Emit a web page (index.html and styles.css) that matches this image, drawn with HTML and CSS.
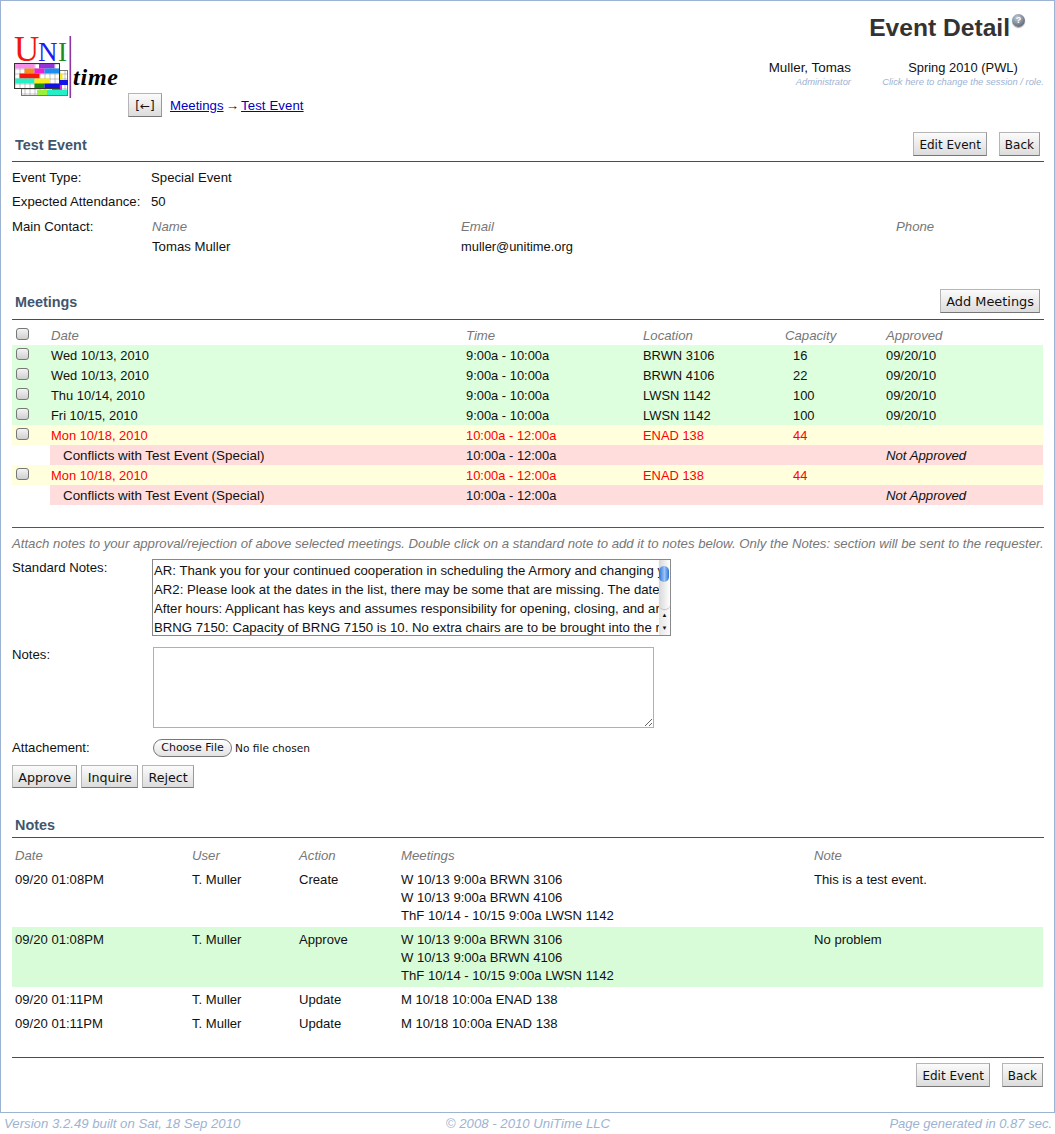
FILE: index.html
```html
<!DOCTYPE html>
<html lang="en">
<head>
<meta charset="utf-8">
<title>Event Detail</title>
<link rel="stylesheet" href="styles.css">
</head>
<body>
<div class="frame">
  <header class="top">
    <div class="top-left">
      <svg class="logo" width="106" height="64" viewBox="14 34 106 64">
        <defs>
          <pattern id="cells" x="14.5" y="62.5" width="5" height="5" patternUnits="userSpaceOnUse">
            <path d="M5 0H0V5" fill="none" stroke="#8a8a8a" stroke-width="1"/>
          </pattern>
        </defs>
        <text class="logo-uni" x="14" y="60" fill="#f0170c">U</text>
        <text class="logo-ni" x="38" y="60" fill="#1c1cf0">N</text>
        <text class="logo-ni" x="58" y="60" fill="#1f8a1f">I</text>
        <rect x="21.5" y="69.5" width="46" height="25" fill="#fff"/>
        <rect x="21.5" y="69.5" width="46" height="25" fill="url(#cells)" stroke="#777"/>
        <rect x="60" y="73" width="2.5" height="5" fill="#f2e81c"/>
        <rect x="60" y="79" width="8" height="5" fill="#1414e6"/>
        <rect x="52" y="84" width="10" height="5" fill="#e92ad8"/>
        <rect x="37" y="89" width="10" height="5" fill="#9bf03c"/>
        <rect x="47" y="89" width="20" height="5" fill="#25efc6"/>
        <rect x="14.5" y="62.5" width="45" height="25" fill="#fff"/>
        <rect x="14.5" y="62.5" width="45" height="25" fill="url(#cells)"/>
        <rect x="15" y="62.5" width="19.5" height="5" fill="#f58ee8"/>
        <rect x="39" y="62.5" width="15.5" height="5" fill="#9333d8"/>
        <rect x="24.5" y="67.5" width="10" height="5" fill="#f58e1e"/>
        <rect x="34.5" y="67.5" width="10" height="5" fill="#ee1fd6"/>
        <rect x="44.5" y="67.5" width="15" height="5" fill="#1a8ff0"/>
        <rect x="19.5" y="72.5" width="20" height="5" fill="#f5160c"/>
        <rect x="14.5" y="77.5" width="20" height="5" fill="#25efc6"/>
        <rect x="34.5" y="77.5" width="15" height="5" fill="#f6f01a"/>
        <rect x="34.5" y="82.5" width="10" height="5" fill="#168a16"/>
        <rect x="44.5" y="82.5" width="15" height="5" fill="#1212e0"/>
        <rect x="14.5" y="62.5" width="45" height="25" fill="none" stroke="#333"/>
        <rect x="69.5" y="35" width="1.6" height="62" fill="#8e35a8"/>
        <text class="logo-time" x="73" y="84" textLength="45">time</text>
      </svg>
      <nav class="crumbs">
        <button class="btn btn-back" type="button">[←]</button>
        <span class="crumb-path"><a href="#meetings">Meetings</a> <span class="sep">→</span> <a class="crumb-last" href="#event">Test Event</a></span>
      </nav>
    </div>
    <div class="top-right">
      <div class="page-title">
        <h1>Event Detail</h1>
        <span class="help">?</span>
      </div>
      <div class="session">
        <div class="session-user">Muller, Tomas<small>Administrator</small></div>
        <div class="session-term">Spring 2010 (PWL)<small>Click here to change the session / role.</small></div>
      </div>
    </div>
  </header>

  <section class="sec-head sec-first">
    <h2>Test Event</h2>
    <div class="actions"><button class="btn" type="button">Edit Event</button><button class="btn" type="button">Back</button></div>
  </section>

  <div class="field f-type"><span class="label">Event Type:</span><span>Special Event</span></div>
  <div class="field f-att"><span class="label">Expected Attendance:</span><span>50</span></div>
  <div class="contact">
    <span class="label">Main Contact:</span>
    <div class="contact-grid">
      <em>Name</em><em>Email</em><em>Phone</em>
      <span>Tomas Muller</span><span class="contact-mail">muller@unitime.org</span><span></span>
    </div>
  </div>

  <section class="sec-head sec-meet">
    <h2>Meetings</h2>
    <div class="actions"><button class="btn btn-wide" type="button">Add Meetings</button></div>
  </section>

  <table class="meet">
    <colgroup><col class="c1"><col class="c2"><col class="c3"><col class="c4"><col class="c5"><col class="c6"></colgroup>
    <thead>
      <tr><th><input type="checkbox" class="cb"></th><th>Date</th><th>Time</th><th>Location</th><th>Capacity</th><th>Approved</th></tr>
    </thead>
    <tbody>
      <tr class="ok"><td><input type="checkbox" class="cb"></td><td>Wed 10/13, 2010</td><td>9:00a - 10:00a</td><td>BRWN 3106</td><td class="cap">16</td><td>09/20/10</td></tr>
      <tr class="ok"><td><input type="checkbox" class="cb"></td><td>Wed 10/13, 2010</td><td>9:00a - 10:00a</td><td>BRWN 4106</td><td class="cap">22</td><td>09/20/10</td></tr>
      <tr class="ok"><td><input type="checkbox" class="cb"></td><td>Thu 10/14, 2010</td><td>9:00a - 10:00a</td><td>LWSN 1142</td><td class="cap">100</td><td>09/20/10</td></tr>
      <tr class="ok"><td><input type="checkbox" class="cb"></td><td>Fri 10/15, 2010</td><td>9:00a - 10:00a</td><td>LWSN 1142</td><td class="cap">100</td><td>09/20/10</td></tr>
      <tr class="pending"><td><input type="checkbox" class="cb"></td><td>Mon 10/18, 2010</td><td>10:00a - 12:00a</td><td>ENAD 138</td><td class="cap">44</td><td></td></tr>
      <tr class="conflict"><td></td><td class="ctext">Conflicts with Test Event (Special)</td><td>10:00a - 12:00a</td><td></td><td></td><td><em class="na">Not Approved</em></td></tr>
      <tr class="pending"><td><input type="checkbox" class="cb"></td><td>Mon 10/18, 2010</td><td>10:00a - 12:00a</td><td>ENAD 138</td><td class="cap">44</td><td></td></tr>
      <tr class="conflict"><td></td><td class="ctext">Conflicts with Test Event (Special)</td><td>10:00a - 12:00a</td><td></td><td></td><td><em class="na">Not Approved</em></td></tr>
    </tbody>
  </table>

  <hr class="rule rule-a">
  <p class="hint">Attach notes to your approval/rejection of above selected meetings. Double click on a standard note to add it to notes below. Only the Notes: section will be sent to the requester.</p>

  <div class="form-row row-std">
    <span class="label">Standard Notes:</span>
    <div class="listbox">
      <div class="list-items">
        <div>AR: Thank you for your continued cooperation in scheduling the Armory and changing your event dates.</div>
        <div>AR2: Please look at the dates in the list, there may be some that are missing. The dates that are listed</div>
        <div>After hours: Applicant has keys and assumes responsibility for opening, closing, and arranging the room.</div>
        <div>BRNG 7150: Capacity of BRNG 7150 is 10. No extra chairs are to be brought into the room for the event.</div>
      </div>
      <div class="scroll">
        <div class="track"><div class="thumb"></div></div>
        <div class="arrow">▲</div>
        <div class="arrow">▼</div>
      </div>
    </div>
  </div>
  <div class="form-row row-notes">
    <span class="label">Notes:</span>
    <textarea class="notes"></textarea>
  </div>
  <div class="form-row row-file">
    <span class="label">Attachement:</span>
    <input type="file" class="file">
  </div>
  <div class="decide"><button class="btn" type="button">Approve</button><button class="btn" type="button">Inquire</button><button class="btn" type="button">Reject</button></div>

  <section class="sec-head sec-notes"><h2>Notes</h2></section>

  <table class="log">
    <colgroup><col class="l1"><col class="l2"><col class="l3"><col class="l4"><col class="l5"></colgroup>
    <thead><tr><th>Date</th><th>User</th><th>Action</th><th>Meetings</th><th>Note</th></tr></thead>
    <tbody>
      <tr class="multi"><td>09/20 01:08PM</td><td>T. Muller</td><td>Create</td><td>W 10/13 9:00a BRWN 3106<br>W 10/13 9:00a BRWN 4106<br>ThF 10/14 - 10/15 9:00a LWSN 1142</td><td>This is a test event.</td></tr>
      <tr class="multi ok-log"><td>09/20 01:08PM</td><td>T. Muller</td><td>Approve</td><td>W 10/13 9:00a BRWN 3106<br>W 10/13 9:00a BRWN 4106<br>ThF 10/14 - 10/15 9:00a LWSN 1142</td><td>No problem</td></tr>
      <tr class="single"><td>09/20 01:11PM</td><td>T. Muller</td><td>Update</td><td>M 10/18 10:00a ENAD 138</td><td></td></tr>
      <tr class="single"><td>09/20 01:11PM</td><td>T. Muller</td><td>Update</td><td>M 10/18 10:00a ENAD 138</td><td></td></tr>
    </tbody>
  </table>

  <hr class="rule rule-b">
  <div class="actions actions-foot"><button class="btn" type="button">Edit Event</button><button class="btn" type="button">Back</button></div>
</div>
<footer class="foot">
  <span>Version 3.2.49 built on Sat, 18 Sep 2010</span>
  <span>© 2008 - 2010 UniTime LLC</span>
  <span class="foot-end">Page generated in 0.87 sec.</span>
</footer>
</body>
</html>
```

FILE: styles.css
```css
* { box-sizing: border-box; }
html, body { margin: 0; padding: 0; }
body {
  font-family: "Liberation Sans", Arial, sans-serif;
  font-size: 13.2px;
  line-height: 16px;
  color: #111;
  background: #fff;
  width: 1055px;
}
.frame {
  border: 1px solid #9db3d3;
  border-left-width: 1.5px;
  height: 1113px;
  padding: 0 10px 0 11px;
}
.top { display: flex; justify-content: space-between; height: 121px; }
.top-left { padding: 34px 0 0 2px; }
.logo { display: block; }
.logo-uni { font: 35px "Liberation Serif", serif; }
.logo-ni { font: 27px "Liberation Serif", serif; }
.logo-time { font: italic bold 24px "Liberation Serif", serif; fill: #000; }
.crumbs { margin: -6px 0 0 114px; display: flex; align-items: center; gap: 8px; height: 24px; }
.crumbs a { color: #0000c0; }
.crumb-path { margin-top: 2px; }
.sep { margin: 0 -1.5px; }
.crumb-last { letter-spacing: 0.1px; }
.btn-back { width: 34px; }
.top-right { width: 310px; margin-right: -10px; }
.page-title { display: flex; justify-content: flex-end; padding: 12px 29px 0 0; height: 60px; }
.page-title h1 { margin: 0; font-size: 24.6px; line-height: 30px; font-weight: bold; color: #333; }
.help {
  width: 13px; height: 13px; margin: 1px 0 0 2px; border-radius: 50%;
  background: radial-gradient(circle at 40% 30%, #c5ccd8, #5f6a7c 75%);
  box-shadow: 0 1px 1px #aaa;
  color: #fff; font-size: 9px; line-height: 13px; text-align: center; font-weight: bold;
}
.session { display: flex; }
.session div { line-height: 14px; }
.session small { display: block; font-size: 9.4px; font-style: italic; color: #9db3d3; line-height: 11px; margin-top: 1px; }
.session-user { width: 107px; text-align: right; font-size: 13.4px; }
.session-term { width: 172px; margin-left: 26px; text-align: center; font-size: 12.9px; white-space: nowrap; }

.sec-head { display: flex; justify-content: space-between; align-items: flex-end; border-bottom: 1px solid #3d5068; }
.sec-head h2 { margin: 0 0 0 3px; font-size: 14.4px; line-height: 18px; font-weight: bold; color: #3f566f; padding-bottom: 7px; }
.sec-first { height: 40px; }
.sec-meet { height: 44px; margin-top: 14px; }
.sec-meet h2 { padding-bottom: 8px; }
.sec-meet .actions { padding-bottom: 6px; }
.sec-notes { height: 26px; margin-top: 24px; }
.sec-notes h2 { padding-bottom: 3px; }
.actions { display: flex; gap: 12px; padding: 0 4px 5px 0; }
.btn {
  font-family: "DejaVu Sans", "Liberation Sans", sans-serif;
  font-size: 12px;
  height: 24px;
  padding: 1px 5px 0;
  background: linear-gradient(#fbfbfb, #dcdcdc);
  border: 1px solid #b5b5b5;
  border-bottom-color: #777;
  border-right-color: #999;
  border-radius: 0;
  color: #111;
  white-space: nowrap;
}
.btn-wide { font-size: 12.9px; }
.label { display: block; }
.field { display: grid; grid-template-columns: 139px 1fr; height: 24px; padding-top: 8px; line-height: 16px; }
.f-type { height: 28px; }
.f-att { height: 24px; padding-top: 4px; }
.contact { display: grid; grid-template-columns: 140px 1fr; padding-top: 5px; height: 48px; }
.contact-grid { display: grid; grid-template-columns: 309px 435px 1fr; grid-auto-rows: 20px; line-height: 16px; }
.contact-grid em { color: #777; }
.contact-mail { font-size: 12.9px; }

table { border-collapse: collapse; table-layout: fixed; width: 1031px; }
th { font-weight: normal; font-style: italic; color: #777; text-align: left; padding: 0 0 0 1px; }
td { padding: 1px 0 0 1px; vertical-align: middle; }
.meet { margin-top: 5px; }
.meet tr { height: 20px; }
.meet th { padding-top: 2px; }
.meet td { font-size: 12.9px; }
.meet .c1 { width: 38px; }
.meet .c2 { width: 415px; }
.meet .c3 { width: 177px; }
.meet .c4 { width: 142px; }
.meet .c5 { width: 101px; }
.meet td.cap { padding-left: 9px; }
.meet td:first-child, .meet th:first-child { padding: 0 0 0 4px; }
.cb {
  appearance: none; -webkit-appearance: none; display: block; margin: 0 0 2px 0;
  width: 13px; height: 12px; border: 1px solid #777; border-radius: 3px;
  background: linear-gradient(#f4f4f4, #cfcfcf);
}
.ok td { background: #dfd; }
.pending td { background: #ffd; color: #f00; }
.conflict td { background: #fdd; }
.conflict td:first-child { background: transparent; }
.meet td.ctext { padding-left: 13px; font-size: 13.4px; }
.na { color: #111; font-size: 13.2px; }

.rule { border: 0; border-top: 1px solid #555; margin: 0; height: 1px; }
.rule-a { margin-top: 22px; }
.rule-b { margin-top: 22px; border-top-color: #3d5068; }
.hint { margin: 8px 0 0; font-style: italic; color: #777; white-space: nowrap; font-size: 13.2px; }
.form-row { display: grid; grid-template-columns: 140px 1fr; }
.row-std { margin-top: 7px; height: 88px; line-height: 14px; }
.row-std .label { padding-top: 2px; }
.listbox { width: 519px; height: 77px; border: 1px solid #888; display: flex; }
.list-items { flex: 1; min-width: 0; overflow: hidden; padding: 1px 0 0 1px; line-height: 19px; white-space: nowrap; }
.scroll { width: 11px; background: linear-gradient(90deg, #e6e6e6, #fbfbfb); display: flex; flex-direction: column; }
.track { height: 49px; border-radius: 0 0 5px 5px; background: linear-gradient(90deg, #d8d8d8, #fff); padding-top: 6px; box-shadow: 0 1px 1px #bbb; flex: none; }
.thumb { height: 16px; width: 10px; border-radius: 5px; background: linear-gradient(90deg, #2d72d8, #9cc4f4 55%, #2d72d8); }
.arrow { font-size: 6px; line-height: 13px; height: 13px; text-align: center; color: #111; }
.track + .arrow { margin-top: auto; }
.row-notes { height: 91px; }
.notes { display: block; margin-left: 1px; width: 501px; height: 81px; border: 1px solid #a3b1cc; background: #fff; padding: 2px; }
.row-file { height: 18px; line-height: 18px; align-items: center; }
.row-file .label { padding-top: 1px; }
.file { margin-left: 1px; font: 10.6px "DejaVu Sans", sans-serif; color: #111; width: 300px; }
.file::file-selector-button {
  font: 11px "DejaVu Sans", sans-serif; height: 18px; width: 79px; padding: 0; margin-right: 3px;
  border: 1px solid #777; border-radius: 9px; background: linear-gradient(#fff, #e2e2e2); color: #111;
}
.decide { display: flex; gap: 4px; margin-top: 9px; }
.decide .btn { height: 23px; font-size: 12.7px; padding: 1px 5.3px 0; }

.log { margin-top: 9px; }
.log .l1 { width: 180px; }
.log .l2 { width: 107px; }
.log .l3 { width: 102px; }
.log .l4 { width: 413px; }
.log th { padding: 1px 0 0; height: 16px; }
.log td { vertical-align: top; padding: 0; line-height: 18px; font-size: 13.1px; }
.log th:first-child, .log td:first-child { padding-left: 3px; }
.log thead tr { height: 17px; }
.log th { vertical-align: top; }
.multi td { padding-top: 4px; padding-bottom: 2px; }
.multi { height: 60px; }
.multi:first-child { height: 63px; }
.multi:first-child td { padding-top: 7px; }
.single { height: 24px; }
.single td { padding-top: 4px; }
.ok-log td { background: #d8fcd8; }

.actions-foot { justify-content: flex-end; padding: 5px 1px 0 0; }
.foot {
  display: grid; grid-template-columns: 1fr auto 1fr; padding: 3px 3px 0 4px;
  font-style: italic; color: #9db3d3; font-size: 13.2px;
}
.foot-end { text-align: right; font-size: 13px; }
```
